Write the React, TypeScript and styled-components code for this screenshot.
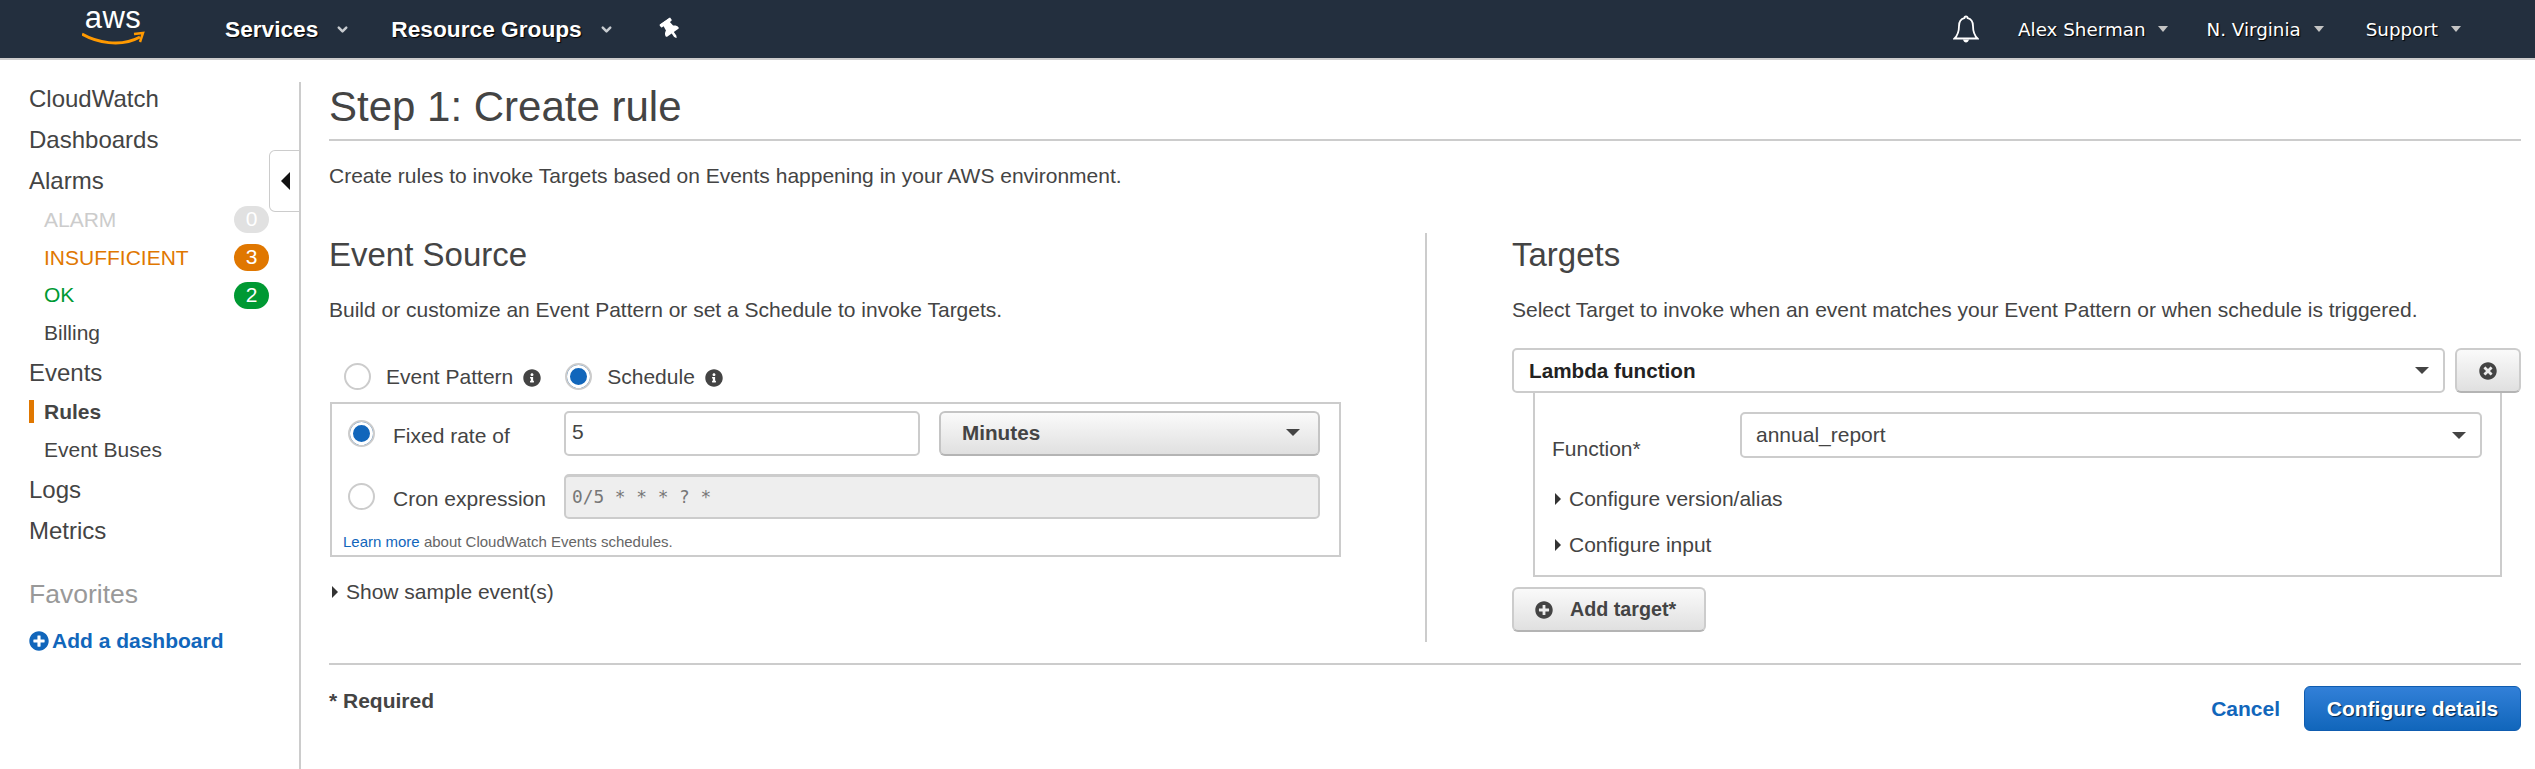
import React from 'react'
import styled, { createGlobalStyle } from 'styled-components'
import { FaInfoCircle, FaPlusCircle, FaThumbtack, FaTimesCircle } from 'react-icons/fa'
import { FiChevronDown } from 'react-icons/fi'

const GlobalStyle = createGlobalStyle`
  html, body {
    margin: 0;
    background: #fff;
    overflow: hidden;
  }
  body {
    font-family: "Liberation Sans", Arial, sans-serif;
    color: #444;
  }
  * { box-sizing: border-box; }
`

const Page = styled.div`
  width: 2535px;
  height: 769px;
  overflow: hidden;
`

const Header = styled.header`
  display: flex;
  align-items: center;
  height: 60px;
  background: #232f3e;
  border-bottom: 2px solid #ccc;
  color: #fff;
`

const Logo = styled.div`
  position: relative;
  width: 62px;
  height: 48px;
  margin: 0 0 0 82px;
`

const LogoText = styled.span`
  display: block;
  text-align: center;
  font-size: 31px;
  line-height: 35px;
  letter-spacing: 0.5px;
  margin-top: -5px;
`

const Smile = styled.svg`
  position: absolute;
  left: 0;
  top: 25px;
`

const ServiceMenu = styled.div<{ $left: number }>`
  display: flex;
  align-items: center;
  margin-left: ${(p) => p.$left}px;
  font-size: 22.7px;
  font-weight: 700;
  text-shadow: 1px 1px 1px #000;
  svg {
    margin-left: 17px;
    color: #c8ccd0;
  }
`

const Pin = styled(FaThumbtack)`
  margin-left: 46px;
  transform: rotate(-35deg);
`

const HeaderRight = styled.div`
  display: flex;
  align-items: center;
  margin-left: auto;
  padding-right: 74px;
`

const Bell = styled.svg`
  margin-right: 39px;
`

const UserMenu = styled.div<{ $gap: number }>`
  display: flex;
  align-items: center;
  margin-right: ${(p) => p.$gap}px;
  font-family: "DejaVu Sans", sans-serif;
  font-size: 18.3px;
  text-shadow: 1px 1px 1px #000;
  &:last-child { margin-right: 0; }
  &::after {
    content: '';
    margin-left: 13px;
    border-left: 5.5px solid transparent;
    border-right: 5.5px solid transparent;
    border-top: 6px solid #c4c4c4;
  }
`

const Body = styled.div`
  display: flex;
  height: 709px;
`

const Sidebar = styled.aside`
  position: relative;
  flex: 0 0 301px;
  margin-top: 22px;
  padding-left: 29px;
  border-right: 2px solid #ccc;
`

const Nav = styled.nav`
  margin-top: -4px;
`

const NavTop = styled.div`
  height: 41px;
  line-height: 41px;
  font-size: 24px;
`

const NavSub = styled.div<{ $color?: string; $active?: boolean }>`
  position: relative;
  display: flex;
  align-items: center;
  justify-content: space-between;
  width: 240px;
  height: 37.8px;
  padding-left: 15px;
  font-size: 21px;
  color: ${(p) => p.$color || '#444'};
  font-weight: ${(p) => (p.$active ? 700 : 400)};
  ${(p) =>
    p.$active
      ? `&::before {
    content: '';
    position: absolute;
    left: 0;
    top: 7px;
    width: 5px;
    height: 23px;
    background: #e07700;
  }`
      : ''}
`

const Badge = styled.span<{ $bg: string }>`
  width: 35px;
  height: 27px;
  line-height: 26px;
  border-radius: 14px;
  background: ${(p) => p.$bg};
  color: #fff;
  text-align: center;
`

const Favorites = styled.div`
  margin-top: 25px;
  font-size: 26.5px;
  line-height: 36px;
  color: #999;
`

const AddDashboard = styled.a`
  display: flex;
  align-items: center;
  gap: 3px;
  margin-top: 17px;
  font-size: 21px;
  line-height: 24px;
  font-weight: 700;
  color: #1166bb;
`

const CollapseTab = styled.div`
  position: absolute;
  right: -2px;
  top: 68px;
  display: flex;
  align-items: center;
  width: 32px;
  height: 62px;
  padding-left: 11px;
  background: #fff;
  border: 1px solid #ccc;
  border-right: 2px solid #ccc;
  border-radius: 6px 0 0 6px;
  &::before {
    content: '';
    border-top: 9px solid transparent;
    border-bottom: 9px solid transparent;
    border-right: 9px solid #111;
  }
`

const Main = styled.main`
  flex: 1;
  padding: 0 14px 0 28px;
`

const Title = styled.h1`
  margin: 0;
  padding: 22px 0 7px;
  border-bottom: 2px solid #ccc;
  font-size: 42px;
  line-height: 50px;
  font-weight: 400;
`

const Lead = styled.p`
  margin: 20px 0 0;
  font-size: 21px;
  line-height: 30px;
`

const Columns = styled.div`
  display: grid;
  grid-template-columns: 1096px 1096px;
  margin-top: 42px;
  height: 409px;
`

const Column = styled.section``

const RightColumn = styled.section`
  padding-left: 85px;
  border-left: 2px solid #ccc;
`

const Heading = styled.h2`
  margin: 0;
  font-size: 33px;
  line-height: 44px;
  font-weight: 400;
`

const SubText = styled.p`
  margin: 18px 0 0;
  font-size: 21px;
  line-height: 30px;
`

const RadioRow = styled.div`
  display: flex;
  align-items: center;
  margin: 38px 0 0 15px;
  height: 27px;
  font-size: 21px;
`

const Radio = styled.span<{ $on?: boolean }>`
  flex: none;
  display: block;
  width: 27px;
  height: 27px;
  border-radius: 50%;
  border: 2px solid #ccc;
  background: ${(p) => (p.$on ? '#1166bb' : '#fff')};
  box-shadow: ${(p) => (p.$on ? 'inset 0 0 0 3px #fff' : 'none')};
`

const RadioLabel = styled.span`
  margin-left: 15px;
`

const Info = styled(FaInfoCircle)<{ $after?: number }>`
  margin: 2px ${(p) => p.$after || 0}px 0 10px;
  color: #444;
  font-size: 18px;
`

const ScheduleBox = styled.div`
  width: 1011px;
  height: 155px;
  margin: 12px 0 0 1px;
  padding: 7px 19px 0 16px;
  border: 2px solid #ccc;
`

const ScheduleRow = styled.div`
  display: flex;
  align-items: center;
  height: 45px;
  margin-bottom: 18px;
`

const RowLabel = styled.span`
  flex: 0 0 189px;
  padding: 5px 0 0 18px;
  font-size: 21px;
`

const RateInput = styled.input`
  width: 356px;
  height: 45px;
  margin-right: 19px;
  padding: 0 6px 3px;
  border: 2px solid #ccc;
  border-radius: 5px;
  font: 21px "Liberation Sans", sans-serif;
  color: #444;
`

const CronInput = styled.div`
  flex: 1;
  height: 45px;
  padding: 9px 6px 0;
  background: #eee;
  border: 2px solid #ccc;
  border-top-width: 3px;
  border-radius: 5px;
  font: 17.8px "DejaVu Sans Mono", monospace;
  color: #777;
`

const GradientSelect = styled.div`
  flex: 1;
  display: flex;
  align-items: center;
  justify-content: space-between;
  height: 45px;
  padding: 0 18px 2px 21px;
  background: linear-gradient(#fafafa, #e0e0e0);
  border: 2px solid #c4c4c4;
  border-bottom-color: #b4b4b4;
  border-radius: 6px;
  font-size: 20.7px;
  font-weight: 700;
`

const Caret = styled.span<{ $w?: number }>`
  flex: none;
  border-left: ${(p) => p.$w || 7}px solid transparent;
  border-right: ${(p) => p.$w || 7}px solid transparent;
  border-top: ${(p) => p.$w || 7}px solid #444;
`

const Hint = styled.div`
  margin-top: -5px;
  font-size: 15px;
  line-height: 20px;
  margin-left: -5px;
  color: #666;
`

const BlueLink = styled.a`
  color: #1166bb;
`

const Expander = styled.div<{ $top: number; $left?: number }>`
  display: flex;
  align-items: center;
  margin: ${(p) => p.$top}px 0 0 ${(p) => p.$left || 3}px;
  font-size: 21px;
  line-height: 26px;
  &::before {
    content: '';
    margin-right: 8px;
    border-top: 6px solid transparent;
    border-bottom: 6px solid transparent;
    border-left: 6px solid #333;
  }
`

const TargetRow = styled.div`
  display: flex;
  gap: 10px;
  margin-top: 23px;
`

const SelectBox = styled.div<{ $bold?: boolean }>`
  flex: 1;
  display: flex;
  align-items: center;
  justify-content: space-between;
  height: ${(p) => (p.$bold ? 45 : 46)}px;
  padding: 0 14px 0 ${(p) => (p.$bold ? 15 : 14)}px;
  border: 2px solid #ccc;
  border-radius: 5px;
  font-size: ${(p) => (p.$bold ? 20.7 : 21)}px;
  font-weight: ${(p) => (p.$bold ? 700 : 400)};
  color: ${(p) => (p.$bold ? '#222' : '#444')};
  background: #fff;
`

const GreyButton = styled.button`
  display: flex;
  align-items: center;
  height: 45px;
  background: linear-gradient(#fafafa, #e0e0e0);
  border: 2px solid #ccc;
  border-bottom-color: #b4b4b4;
  border-radius: 6px;
  font: 700 19.7px "Liberation Sans", sans-serif;
  color: #444;
`

const RemoveButton = styled(GreyButton)`
  width: 66px;
  justify-content: center;
  font-size: 18px;
`

const AddButton = styled(GreyButton)`
  width: 194px;
  margin-top: 10px;
  padding: 0 0 0 21px;
  svg {
    margin-right: 17px;
    font-size: 18px;
  }
`

const TargetPanel = styled.div`
  width: 969px;
  height: 184px;
  margin-left: 21px;
  padding: 19px 18px 0 17px;
  border: 2px solid #ccc;
  border-top: 0;
`

const FunctionRow = styled.div`
  display: flex;
`

const FunctionLabel = styled.label`
  flex: 0 0 188px;
  padding-top: 25px;
  font-size: 21px;
  line-height: 24px;
`

const Footer = styled.footer`
  display: flex;
  justify-content: space-between;
  margin-top: 21px;
  padding-top: 21px;
  border-top: 2px solid #ccc;
`

const Required = styled.div`
  font-size: 21px;
  line-height: 30px;
  font-weight: 700;
`

const Actions = styled.div`
  display: flex;
  align-items: center;
  gap: 24px;
`

const CancelLink = styled(BlueLink)`
  font-size: 21px;
  font-weight: 700;
`

const PrimaryButton = styled.button`
  width: 217px;
  height: 45px;
  background: linear-gradient(#3280d8, #1166bb);
  border: 1px solid #0f5cb0;
  border-radius: 6px;
  font: 700 21px "Liberation Sans", sans-serif;
  color: #fff;
  text-shadow: 1px 1px 1px #00264d;
`

export default function App() {
  return (
    <Page>
      <GlobalStyle />
      <Header>
        <Logo>
          <LogoText>aws</LogoText>
          <Smile width="64" height="20" viewBox="0 0 64 20">
            <path d="M0 4C14 12 38 18 58 7" fill="none" stroke="#f90" strokeWidth="3" />
            <path d="M52 4L61 3L58 12" fill="none" stroke="#f90" strokeWidth="2.500" />
          </Smile>
        </Logo>
        <ServiceMenu $left={81}>
          Services
          <FiChevronDown size={15} strokeWidth={4} />
        </ServiceMenu>
        <ServiceMenu $left={41}>
          Resource Groups
          <FiChevronDown size={15} strokeWidth={4} />
        </ServiceMenu>
        <Pin size={21} />
        <HeaderRight>
          <Bell width="26" height="28" viewBox="0 0 26 28">
            <path
              d="M13 1.500c-1 0-1.600.7-1.600 1.600C7.600 4 6 6.800 6 11c0 6-1.500 9.500-4.500 12.500h23C21.500 20.500 20 17 20 11c0-4.200-1.600-7-5.400-7.900 0-.9-.6-1.600-1.600-1.600z"
              fill="none"
              stroke="#fff"
              strokeWidth="1.800"
            />
            <path d="M10 24.500c.5 2 1.700 3 3 3s2.500-1 3-3z" fill="#fff" />
          </Bell>
          <UserMenu $gap={38}>Alex Sherman</UserMenu>
          <UserMenu $gap={42}>N. Virginia</UserMenu>
          <UserMenu $gap={0}>Support</UserMenu>
        </HeaderRight>
      </Header>
      <Body>
        <Sidebar>
          <Nav>
            <NavTop>CloudWatch</NavTop>
            <NavTop>Dashboards</NavTop>
            <NavTop>Alarms</NavTop>
            <NavSub $color="#ccc">
              ALARM<Badge $bg="#e1e1e1">0</Badge>
            </NavSub>
            <NavSub $color="#e07700">
              INSUFFICIENT<Badge $bg="#e07700">3</Badge>
            </NavSub>
            <NavSub $color="#009933">
              OK<Badge $bg="#009933">2</Badge>
            </NavSub>
            <NavSub>Billing</NavSub>
            <NavTop>Events</NavTop>
            <NavSub $active>Rules</NavSub>
            <NavSub>Event Buses</NavSub>
            <NavTop>Logs</NavTop>
            <NavTop>Metrics</NavTop>
          </Nav>
          <Favorites>Favorites</Favorites>
          <AddDashboard>
            <FaPlusCircle size={20} />
            Add a dashboard
          </AddDashboard>
          <CollapseTab />
        </Sidebar>
        <Main>
          <Title>Step 1: Create rule</Title>
          <Lead>Create rules to invoke Targets based on Events happening in your AWS environment.</Lead>
          <Columns>
            <Column>
              <Heading>Event Source</Heading>
              <SubText>Build or customize an Event Pattern or set a Schedule to invoke Targets.</SubText>
              <RadioRow>
                <Radio />
                <RadioLabel>Event Pattern</RadioLabel>
                <Info $after={24} />
                <Radio $on />
                <RadioLabel>Schedule</RadioLabel>
                <Info />
              </RadioRow>
              <ScheduleBox>
                <ScheduleRow>
                  <Radio $on />
                  <RowLabel>Fixed rate of</RowLabel>
                  <RateInput value="5" readOnly />
                  <GradientSelect>
                    Minutes
                    <Caret />
                  </GradientSelect>
                </ScheduleRow>
                <ScheduleRow>
                  <Radio />
                  <RowLabel>Cron expression</RowLabel>
                  <CronInput>0/5 * * * ? *</CronInput>
                </ScheduleRow>
                <Hint>
                  <BlueLink>Learn more</BlueLink> about CloudWatch Events schedules.
                </Hint>
              </ScheduleBox>
              <Expander $top={22}>Show sample event(s)</Expander>
            </Column>
            <RightColumn>
              <Heading>Targets</Heading>
              <SubText>Select Target to invoke when an event matches your Event Pattern or when schedule is triggered.</SubText>
              <TargetRow>
                <SelectBox $bold>
                  Lambda function
                  <Caret />
                </SelectBox>
                <RemoveButton>
                  <FaTimesCircle />
                </RemoveButton>
              </TargetRow>
              <TargetPanel>
                <FunctionRow>
                  <FunctionLabel>Function*</FunctionLabel>
                  <SelectBox>
                    annual_report
                    <Caret />
                  </SelectBox>
                </FunctionRow>
                <Expander $top={25}>Configure version/alias</Expander>
                <Expander $top={20}>Configure input</Expander>
              </TargetPanel>
              <AddButton>
                <FaPlusCircle />
                Add target*
              </AddButton>
            </RightColumn>
          </Columns>
          <Footer>
            <Required>* Required</Required>
            <Actions>
              <CancelLink>Cancel</CancelLink>
              <PrimaryButton>Configure details</PrimaryButton>
            </Actions>
          </Footer>
        </Main>
      </Body>
    </Page>
  )
}
